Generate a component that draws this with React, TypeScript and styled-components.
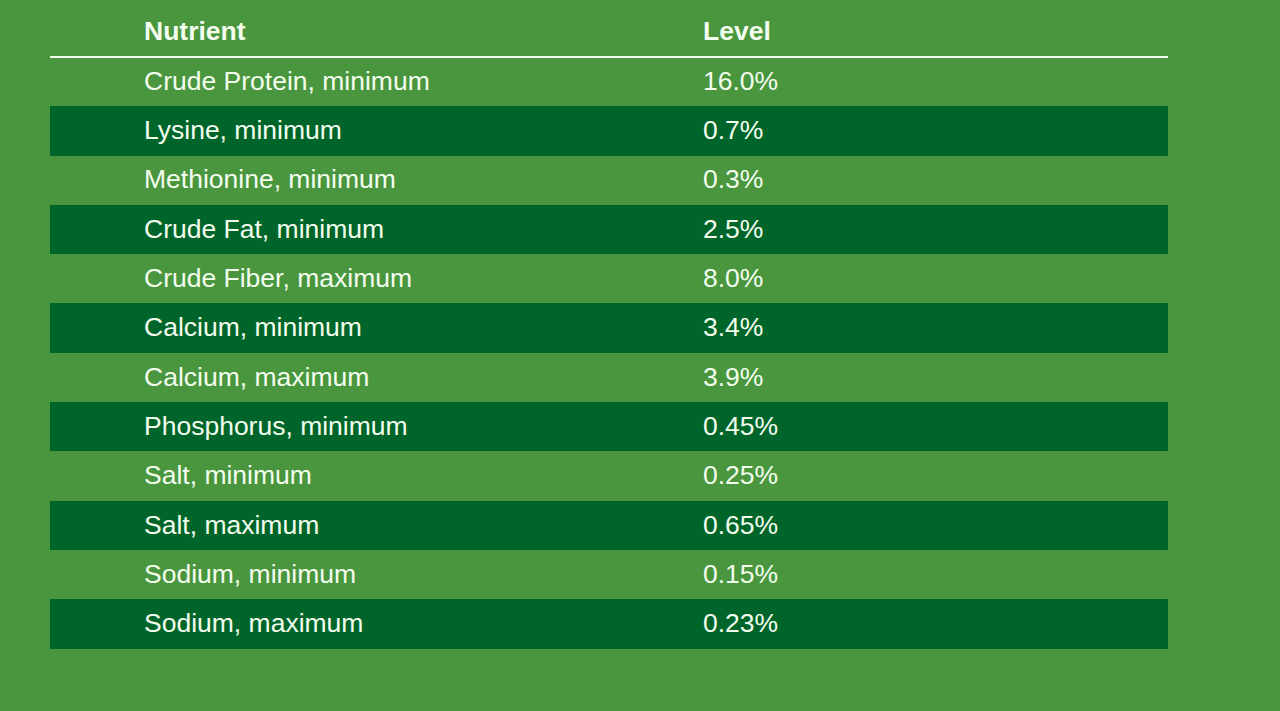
import React from "react";
import styled, { createGlobalStyle } from "styled-components";

const Global = createGlobalStyle`
  html, body {
    margin: 0;
    padding: 0;
    background: #4a963f;
  }
  body {
    font-family: "Liberation Sans", Arial, sans-serif;
  }
`;

const Page = styled.div`
  padding: 10px 112px 0 50px;
  min-height: 711px;
  box-sizing: border-box;
  background: #4a963f;
`;

const Table = styled.table`
  width: 1118px;
  border-collapse: collapse;
  table-layout: fixed;
  color: #f3fdee;
  font-size: 26.5px;
`;

const HeadCell = styled.th`
  height: 47px;
  padding: 0 0 3px 94px;
  text-align: left;
  font-weight: bold;
  vertical-align: middle;
  border-bottom: 2px solid #f3fdee;
  box-sizing: border-box;
`;

const Row = styled.tr<{ $dark: boolean }>`
  background: ${(p) => (p.$dark ? "#00652a" : "transparent")};
`;

const Cell = styled.td`
  height: 49.3px;
  padding: 0 0 1px 94px;
  vertical-align: middle;
  box-sizing: border-box;
  line-height: 1;
`;

const data: [string, string][] = [
  ["Crude Protein, minimum", "16.0%"],
  ["Lysine, minimum", "0.7%"],
  ["Methionine, minimum", "0.3%"],
  ["Crude Fat, minimum", "2.5%"],
  ["Crude Fiber, maximum", "8.0%"],
  ["Calcium, minimum", "3.4%"],
  ["Calcium, maximum", "3.9%"],
  ["Phosphorus, minimum", "0.45%"],
  ["Salt, minimum", "0.25%"],
  ["Salt, maximum", "0.65%"],
  ["Sodium, minimum", "0.15%"],
  ["Sodium, maximum", "0.23%"],
];

export default function App() {
  return (
    <Page>
      <Global />
      <Table>
        <thead>
          <tr>
            <HeadCell>Nutrient</HeadCell>
            <HeadCell>Level</HeadCell>
          </tr>
        </thead>
        <tbody>
          {data.map(([n, l], i) => (
            <Row key={n} $dark={i % 2 === 1}>
              <Cell>{n}</Cell>
              <Cell>{l}</Cell>
            </Row>
          ))}
        </tbody>
      </Table>
    </Page>
  );
}
